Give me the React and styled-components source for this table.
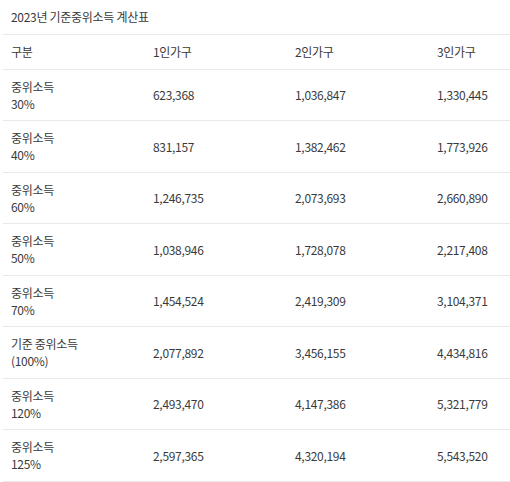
import React from 'react';
import styled, { createGlobalStyle } from 'styled-components';

const GlobalStyle = createGlobalStyle`
  html, body {
    margin: 0;
    padding: 0;
    background: #fff;
  }
  body {
    font-family: "Noto Sans CJK KR", "Noto Sans", sans-serif;
    font-size: 12px;
    color: #3a3a3a;
  }
`;

const ROWS = [
  { label: '중위소득', sub: '30%', values: ['623,368', '1,036,847', '1,330,445'] },
  { label: '중위소득', sub: '40%', values: ['831,157', '1,382,462', '1,773,926'] },
  { label: '중위소득', sub: '60%', values: ['1,246,735', '2,073,693', '2,660,890'] },
  { label: '중위소득', sub: '50%', values: ['1,038,946', '1,728,078', '2,217,408'] },
  { label: '중위소득', sub: '70%', values: ['1,454,524', '2,419,309', '3,104,371'] },
  { label: '기준 중위소득', sub: '(100%)', values: ['2,077,892', '3,456,155', '4,434,816'] },
  { label: '중위소득', sub: '120%', values: ['2,493,470', '4,147,386', '5,321,779'] },
  { label: '중위소득', sub: '125%', values: ['2,597,365', '4,320,194', '5,543,520'] },
];

const HEADERS = ['구분', '1인가구', '2인가구', '3인가구'];

const Wrapper = styled.div`
  padding-left: 3px;
`;

const Table = styled.table`
  width: 507px;
  table-layout: fixed;
  border-collapse: collapse;
  line-height: 17.25px;
  letter-spacing: -0.3px;
`;

const Col = styled.col`
  width: ${(p) => (p.$last ? '81px' : '142px')};
`;

const Cell = styled.td`
  padding: 8px;
  text-align: left;
  vertical-align: middle;
  font-weight: normal;
  white-space: nowrap;
  border-bottom: 1px solid #e9e9e9;
`;

const TitleCell = styled(Cell).attrs({ as: 'th' })`
  padding-bottom: 9px;
`;

const HeadCell = styled(Cell).attrs({ as: 'th' })``;

const Line = styled.span`
  display: block;
`;

export default function App() {
  return (
    <Wrapper>
      <GlobalStyle />
      <Table>
        <colgroup>
          {HEADERS.map((h, i) => (
            <Col key={h} $last={i === HEADERS.length - 1} />
          ))}
        </colgroup>
        <thead>
          <tr>
            <TitleCell colSpan={4}>2023년 기준중위소득 계산표</TitleCell>
          </tr>
          <tr>
            {HEADERS.map((h) => (
              <HeadCell key={h}>{h}</HeadCell>
            ))}
          </tr>
        </thead>
        <tbody>
          {ROWS.map((row) => (
            <tr key={row.sub}>
              <Cell>
                <Line>{row.label}</Line>
                <Line>{row.sub}</Line>
              </Cell>
              {row.values.map((v) => (
                <Cell key={v}>{v}</Cell>
              ))}
            </tr>
          ))}
        </tbody>
      </Table>
    </Wrapper>
  );
}
